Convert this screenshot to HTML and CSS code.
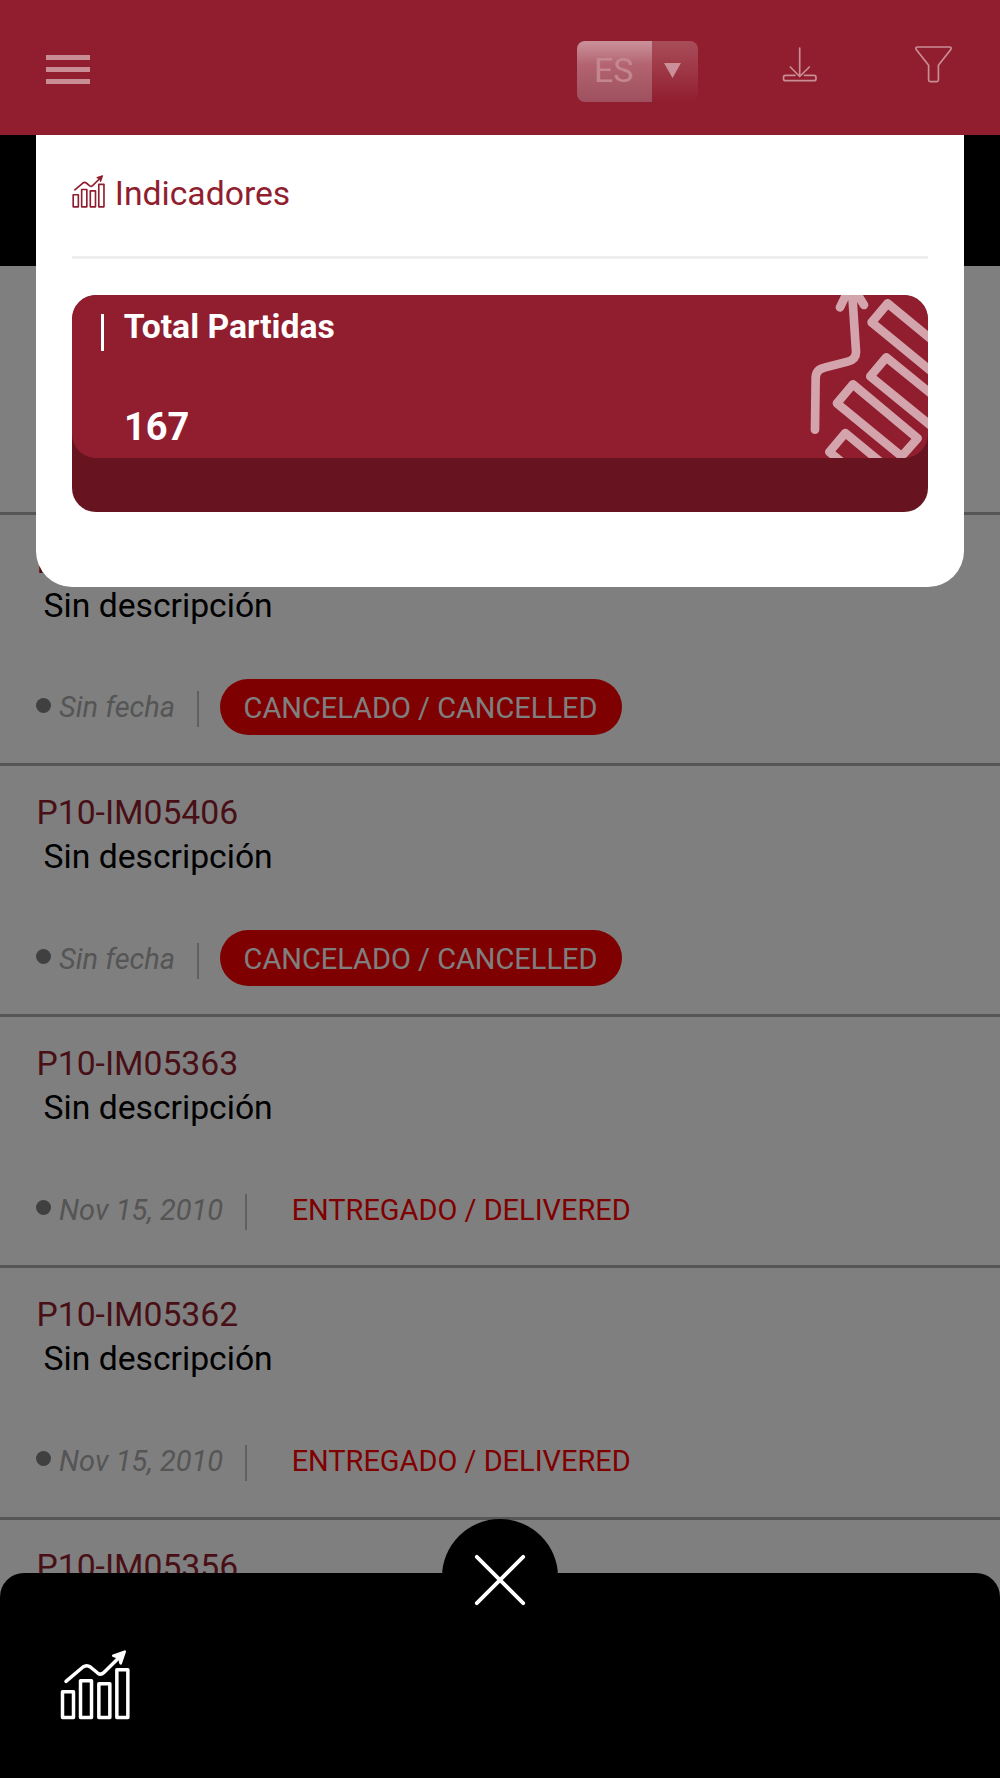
FILE: index.html
```html
<!DOCTYPE html>
<html lang="es">
<head>
<meta charset="utf-8">
<title>Indicadores</title>
<link rel="stylesheet" href="styles.css">
</head>
<body>
<svg class="defs" aria-hidden="true">
  <symbol id="chart" viewBox="61 59 212 212">
    <g fill="none" stroke="currentColor" stroke-width="10.500" stroke-linejoin="round" stroke-linecap="round">
      <path d="M68.500 184.500h33v77h-33zM122.500 151.500h33v110h-33zM177.500 160.500h33v101h-33zM231.500 118.500h33v143h-33z"/>
      <path d="M79 153L130 110Q141 102 152 110L174 128Q183 135 192 127L245 75"/>
      <path d="M221 76L255 64L243 99L239 82Z" fill="currentColor" stroke-width="8"/>
    </g>
  </symbol>
</svg>
<div class="screen">
  <header class="topbar">
    <div class="menu"><i></i><i></i><i></i></div>
    <div class="actions">
      <div class="lang">
        <span class="lang-code">ES</span>
        <span class="lang-arrow"><svg width="17" height="15" viewBox="0 0 17 15"><path d="M0 0h17L8.500 15z" fill="#ca8f98"/></svg></span>
      </div>
      <svg class="download" viewBox="0 0 36 37" fill="none" stroke="#c98d96" stroke-width="1.700" stroke-linecap="round" stroke-linejoin="round">
        <path d="M17.700 2V30M8.300 21L17.700 30.500L27.300 21M13 29.300H3.500Q1.500 29.300 1.500 31.500V32.700Q1.500 34.700 3.500 34.700H32Q34 34.700 34 32.700V31.500Q34 29.300 32 29.300H22.500"/>
      </svg>
      <svg class="filter" viewBox="0 0 37 37" fill="none" stroke="#c98d96" stroke-width="1.700" stroke-linejoin="round">
        <path d="M2.500 1H34.500Q36.800 1.200 35.800 3.500L23.400 19.300V34Q23.200 35.500 21.700 35.700H15.300Q13.700 35.500 13.600 34V19.300L1.200 3.500Q.2 1.200 2.500 1Z"/>
      </svg>
    </div>
  </header>
  <main>
    <div class="band"></div>
    <ul class="list">
      <li class="row row-first"></li>
      <li class="row">
        <div class="code">P10-IM</div>
        <div class="desc">Sin descripción</div>
        <div class="meta"><i class="dot"></i><em class="date">Sin fecha</em><i class="sep"></i><span class="status cancelled">CANCELADO / CANCELLED</span></div>
      </li>
      <li class="row">
        <div class="code">P10-IM05406</div>
        <div class="desc">Sin descripción</div>
        <div class="meta"><i class="dot"></i><em class="date">Sin fecha</em><i class="sep"></i><span class="status cancelled">CANCELADO / CANCELLED</span></div>
      </li>
      <li class="row">
        <div class="code">P10-IM05363</div>
        <div class="desc">Sin descripción</div>
        <div class="meta"><i class="dot"></i><em class="date">Nov 15, 2010</em><i class="sep"></i><span class="status delivered">ENTREGADO / DELIVERED</span></div>
      </li>
      <li class="row">
        <div class="code">P10-IM05362</div>
        <div class="desc">Sin descripción</div>
        <div class="meta"><i class="dot"></i><em class="date">Nov 15, 2010</em><i class="sep"></i><span class="status delivered">ENTREGADO / DELIVERED</span></div>
      </li>
      <li class="row">
        <div class="code">P10-IM05356</div>
      </li>
    </ul>
  </main>
  <div class="dim"></div>
  <section class="sheet">
    <h1 class="sheet-title"><svg class="title-icon"><use href="#chart"/></svg><span>Indicadores</span></h1>
    <div class="card">
      <div class="card-face">
        <div class="card-body">
          <div class="label">Total Partidas</div>
          <div class="value">167</div>
        </div>
        <svg class="art" viewBox="0 75 442 489" fill="none" stroke="#d3a4ac" stroke-width="26" stroke-linecap="round" stroke-linejoin="round">
          <path d="M105 479L107 323Q108 298 133 293L203 275Q230 268 228 243L216 60M180 112L214 42L252 105"/>
          <path d="M475 225L323 100L275 157L470 317M475 389L319 262L271 319L470 481M219 343L413 505L365 559L171 400ZM340 608L196 489L148 546L300 670"/>
        </svg>
      </div>
    </div>
  </section>
  <nav class="bottombar">
    <div class="close"><svg width="52" height="52" viewBox="0 0 52 52" stroke="#fff" stroke-width="3.800" stroke-linecap="round"><path d="M2.800 2.800L49.200 49.200M49.200 2.800L2.800 49.200"/></svg></div>
    <svg class="nav-icon"><use href="#chart"/></svg>
  </nav>
</div>
</body>
</html>
```
FILE: styles.css
```css
* { box-sizing: border-box; }
body { margin: 0; font-family: Roboto, sans-serif; }
.defs { display: none; }
.screen { position: relative; width: 1000px; height: 1778px; overflow: hidden; background: #fff; }

.topbar { position: relative; z-index: 3; height: 135.3px; padding: 41px 48px 0 46px; background: #911e2f; display: flex; justify-content: space-between; }
.menu { width: 43.500px; padding-top: 14px; display: flex; flex-direction: column; gap: 7px; }
.menu i { height: 5px; background: #c98d96; }
.actions { display: flex; align-items: flex-start; }
.lang { display: flex; width: 121px; height: 60.500px; border-radius: 8px; overflow: hidden; }
.lang-code { width: 75px; padding-left: 17px; line-height: 59px; font-size: 34px; font-weight: 400; color: #c48791; background: linear-gradient(#cb929b, #b2636f 40%, #9e505e); }
.lang-arrow { flex: 1; padding: 22px 0 0 12px; background: linear-gradient(#a94d5a, #911e2f); }
.lang-arrow svg { display: block; }
.download { width: 36px; height: 37px; margin: 5px 0 0 84px; }
.filter { width: 37px; height: 37px; margin: 4.500px 0 0 97px; }

.band { height: 130.400px; background: #000; }
.list { margin: 0; padding: 0; list-style: none; }
.row { height: 251.200px; padding: 25px 36px 0; border-bottom: 3px solid #abacb0; }
.row-first { height: 249.200px; }
.code { padding-left: .5px; font-size: 33.700px; line-height: 44px; color: #911e2f; }
.desc { padding-left: 7.500px; font-size: 33.700px; line-height: 43px; color: #000; }
.meta { display: flex; align-items: center; height: 56px; margin-top: 52px; font-size: 29px; }
.dot { width: 15px; height: 15px; margin: -3px 8px 0 0; border-radius: 50%; background: #808080; }
.date { padding-top: 1px; color: #aaa; }
.sep { width: 2px; height: 36px; margin: 5px 21px 0 22px; background: #c0c0c0; }
.status { line-height: 58px; height: 56px; padding: 0 24.500px 0 23.500px; border-radius: 28px; white-space: nowrap; font-size: 28.950px; }
.cancelled { background: #f00; color: #fff; }
.delivered { color: #f00; }

.dim { position: absolute; inset: 135px 0 0; z-index: 1; background: rgba(0, 0, 0, .5); }
.sheet { position: absolute; z-index: 2; left: 36.300px; top: 135.300px; width: 927.500px; height: 451.500px; padding: 0 36.200px; border-radius: 0 0 36px 36px; background: #fff; }
.sheet-title { display: flex; height: 123.300px; margin: 0 0 36px; padding-top: 38px; border-bottom: 3px solid #eee; color: #911e2f; font-size: 33.700px; font-weight: 400; line-height: 41px; }
.title-icon { width: 33.300px; height: 33.300px; margin: 1.500px 9px 0 0; }
.card { height: 217px; border-radius: 24px; background: #671420; overflow: hidden; }
.card-face { display: flex; justify-content: space-between; height: 163.300px; border-radius: 24px; background: #911e2f; overflow: hidden; }
.card-body { padding: 19px 0 0 29px; color: #fff; font-weight: 700; }
.label { height: 37px; padding-left: 19.200px; border-left: 3px solid #fff; font-size: 33.700px; line-height: 26px; }
.value { margin-top: 54px; padding-left: 22.500px; font-size: 38px; line-height: 44px; }
.art { width: 147.300px; height: 163px; }

.bottombar { position: absolute; z-index: 3; left: 0; right: 0; bottom: 0; height: 205.300px; padding: 77px 60px; border-radius: 24px 24px 0 0; background: #000; color: #fff; }
.close { position: absolute; left: 442px; top: -54px; width: 116px; height: 116px; padding: 35px 32px; border-radius: 50%; background: #000; }
.close svg { display: block; }
.nav-icon { display: block; width: 70.700px; height: 70.700px; }
```
